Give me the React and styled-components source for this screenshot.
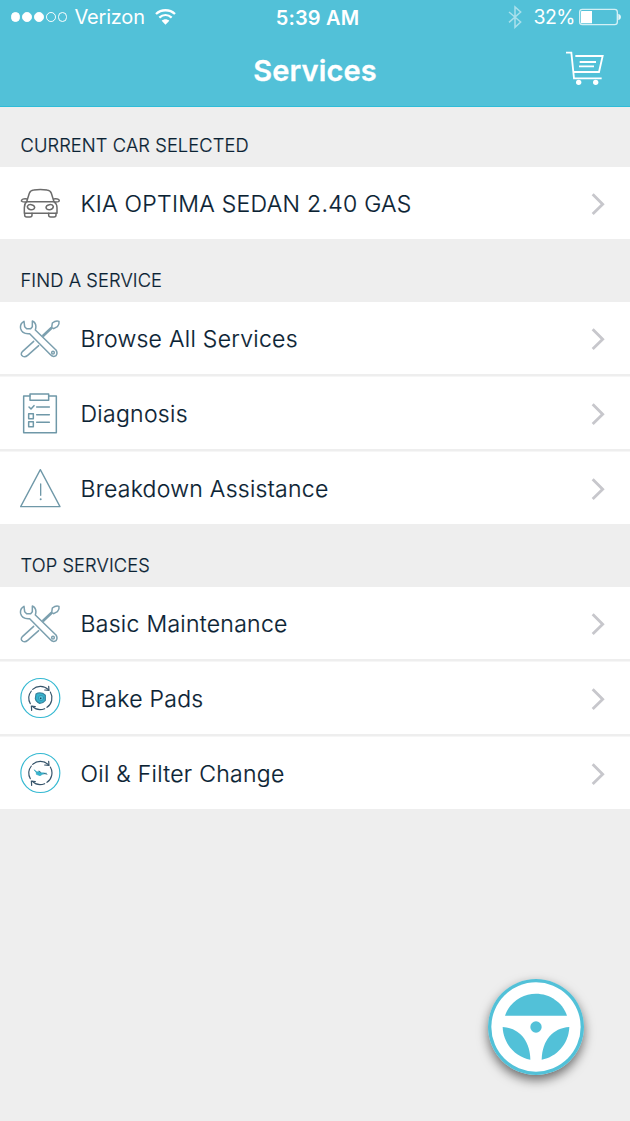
import React from "react";
import styled, { createGlobalStyle } from "styled-components";

const GlobalStyle = createGlobalStyle`
    * {
        box-sizing: border-box;
    }
    body {
        margin: 0;
        background-color: #eeeeee;
        font-family: "Inter", "Liberation Sans", sans-serif;
        color: #0a2233;
    }
`;

const Screen = styled.div`
    width: 630px;
    height: 1121px;
    background-color: #eeeeee;
    overflow: hidden;
`;

const Header = styled.header`
    height: 107px;
    background-color: #52c1d8;
    border-bottom: 1px solid #2fbcd8;
    color: white;
`;

const StatusBar = styled.div`
    display: grid;
    grid-template-columns: 1fr auto 1fr;
    align-items: center;
    height: 34px;
    padding: 0 9px 0 10px;
`;

const StatusLeft = styled.div`
    display: flex;
    align-items: center;
`;

const StatusRight = styled.div`
    display: flex;
    align-items: center;
    justify-content: flex-end;
`;

const Dots = styled.div`
    display: flex;
    gap: 2px;
    margin: 0 7px 0 0.5px;
`;

const Dot = styled.span`
    width: 9.8px;
    height: 9.8px;
    border-radius: 50%;
    border: 1px solid white;
    background-color: ${(props) => (props.$on ? "white" : "transparent")};
`;

const Carrier = styled.span`
    font-size: 20px;
    line-height: 24px;
    letter-spacing: -0.2px;
    margin-right: 10px;
`;

const Clock = styled.span`
    font-size: 20px;
    line-height: 24px;
    font-weight: 600;
    letter-spacing: 0.15px;
    margin-left: 4px;
    padding-top: 1px;
`;

const Percent = styled.span`
    font-size: 19.5px;
    line-height: 24px;
    letter-spacing: -0.5px;
    margin: 0 4px 0 11px;
`;

const NavBar = styled.div`
    display: grid;
    grid-template-columns: 1fr auto 1fr;
    align-items: center;
    height: 72px;
    padding: 0 25px;
`;

const Title = styled.h1`
    grid-column: 2;
    margin: 0;
    padding-top: 2px;
    font-size: 29px;
    line-height: 36px;
    font-weight: 600;
    letter-spacing: 0.1px;
    -webkit-text-stroke: 0.3px white;
`;

const CartButton = styled.button`
    justify-self: end;
    display: flex;
    margin-top: -3px;
    padding: 0;
    border: none;
    background: none;
    color: white;
    cursor: pointer;
`;

const SectionTitle = styled.h2`
    display: flex;
    align-items: center;
    height: ${(props) => props.$height || 63}px;
    margin: 0;
    padding: ${(props) => props.$top || 18}px 20.5px 0;
    font-size: 18.3px;
    line-height: 22px;
    font-weight: 300;
    letter-spacing: 0.1px;
    -webkit-text-stroke: 0.2px #0a2233;
`;

const List = styled.ul`
    display: flex;
    flex-direction: column;
    gap: 2px;
    margin: 0;
    padding: 0;
    list-style: none;
`;

const Row = styled.li`
    display: flex;
    align-items: center;
    box-sizing: content-box;
    height: 72px;
    padding: 0 24px 0 19px;
    background-color: white;
    cursor: pointer;

    & + & {
        border-top: 1px solid #f6f6f6;
    }
`;

const Label = styled.span`
    flex: 1;
    margin-left: 19.5px;
    padding-top: 2px;
    font-size: 23px;
    line-height: 28px;
    font-weight: 300;
    letter-spacing: 0.29px;
    -webkit-text-stroke: 0.2px #0a2233;
    white-space: nowrap;
`;

const IconSvg = styled.svg`
    flex: none;
    width: 42px;
    height: 42px;
    fill: none;
    stroke-linecap: round;
    stroke-linejoin: round;
`;

const Arrow = styled.svg`
    flex: none;
    width: 16px;
    height: 26px;
    margin-top: 2px;
    fill: none;
    stroke: #c7c7cc;
    stroke-width: 8.5;
`;

const WheelButton = styled.button`
    position: absolute;
    left: 488px;
    top: 979px;
    width: 96px;
    height: 96px;
    padding: 0;
    border: none;
    border-radius: 50%;
    background: none;
    box-shadow: 0 5px 11px rgba(0, 0, 0, 0.55);
    cursor: pointer;
`;

const WifiIcon = () => (
    <svg width="21" height="16" viewBox="464 26 63 48" fill="none" stroke="white" strokeWidth="7">
        <path d="M467 41 C483 26 508 26 524 41" />
        <path d="M477 52 C488 42 503 42 514 52" />
        <path d="M484 61 C491 55 500 55 507 61 L495.500 73 Z" fill="white" stroke="none" />
    </svg>
);

const BluetoothIcon = () => (
    <svg width="14" height="24" viewBox="56 15 42 72" fill="none" stroke="white" strokeOpacity="0.5" strokeWidth="4.500">
        <path d="M59 36 L94 66 L77 82 V21 L94 36 L59 67" />
    </svg>
);

const BatteryIcon = () => (
    <svg width="42" height="18" viewBox="267 25 126 54">
        <rect x="269" y="29" width="113" height="46" rx="8" fill="none" stroke="white" strokeOpacity="0.75" strokeWidth="4" />
        <path d="M275 34 H306 V71 H275 Q273 71 273 69 V36 Q273 34 275 34 Z" fill="white" />
        <path d="M385 42 Q393 44 393 52 Q393 60 385 62 Z" fill="white" fillOpacity="0.85" />
    </svg>
);

const CartIcon = () => (
    <svg width="40" height="37" viewBox="225 150 120 111" fill="none" stroke="white" strokeWidth="5.500">
        <path d="M228 158 H244 L252 235 H335" />
        <path d="M256 168 H338 L327 216 H251" />
        <path d="M269 186 H318 M267 199 H312" />
        <circle cx="266" cy="247" r="8" fill="white" stroke="none" />
        <circle cx="317" cy="247" r="8" fill="white" stroke="none" />
    </svg>
);

const CarIcon = () => (
    <IconSvg viewBox="57 186 126 126" stroke="#6b6b6b" strokeWidth="4.500">
        <path d="M80 245 L88 220 Q91 211 101 210 Q121 207 141 210 Q151 211 154 220 L162 245" />
        <path d="M80 245 H162 Q171 252 171 263 V280 H73 V263 Q73 251 80 245 Z" />
        <path d="M81 237 Q65 235 64 243 Q66 247 78 246 M161 237 Q177 235 178 243 Q176 247 164 246" />
        <path d="M74 280 V286 Q74 291 80 291 H90 Q96 291 96 286 V280 M146 280 V286 Q146 291 152 291 H162 Q168 291 168 286 V280" />
        <path d="M82 259 Q85 253 94 254 Q104 256 104 263 Q102 270 92 269 Q82 268 82 259 Z" />
        <path d="M160 259 Q157 253 148 254 Q138 256 138 263 Q140 270 150 269 Q160 268 160 259 Z" />
    </IconSvg>
);

const ToolsIcon = () => (
    <IconSvg viewBox="57 171 126 126" stroke="#7b9fae" strokeWidth="4.500">
        <path d="M72 184 Q59 191 62 206 Q66 223 89 221 L150 283 Q158 293 168 287 Q174 280 168 270 L106 210 Q112 190 97 183 V200 L92 206 H80 L74 200 Z" />
        <circle cx="159" cy="278" r="4" />
        <path d="M101 244 L68 274 Q59 284 69 289 Q76 292 83 286 L116 257" />
        <path d="M128 229 L155 203" strokeWidth="8" strokeLinecap="butt" />
        <path d="M155 203 L157 189 Q168 180 177 184 Q179 192 172 200 L161 206 Z" />
    </IconSvg>
);

const ClipboardIcon = () => (
    <IconSvg viewBox="57 66 126 126" stroke="#6f98a8" strokeWidth="4.500" strokeLinejoin="miter">
        <path d="M90 78 H71 V188 H169 V78 H146" />
        <path d="M90 72 H146 V91 H90 Z" />
        <path d="M87 111 L93 117 L102 107" />
        <path d="M110 111 H148 M110 134 H148 M110 157 H148" />
        <rect x="86" y="131" width="14" height="15" />
        <rect x="86" y="155" width="14" height="15" />
    </IconSvg>
);

const WarningIcon = () => (
    <IconSvg viewBox="57 291 126 126" stroke="#6f98a8" strokeWidth="4">
        <path d="M121 299 L180 410 H62 Z" />
        <path d="M122 342 V376" />
        <circle cx="122" cy="388" r="3" fill="#6f98a8" stroke="none" />
    </IconSvg>
);

// ring with two turning arrows, the part itself is drawn inside
const CycleIcon = ({ children }) => (
    <IconSvg viewBox="57 66 126 126" stroke="#36546a" strokeWidth="3.500">
        <circle cx="121" cy="129" r="58.500" stroke="#35b9d2" />
        <path d="M98 103 A34.500 34.500 0 0 1 145 104 M151 111 A34.500 34.500 0 0 1 141 157" />
        <path d="M134 161 A34.500 34.500 0 0 1 97 154 M91 146 A34.500 34.500 0 0 1 94 108" />
        <path d="M134 105 L147 106 L146 94" />
        <path d="M95 166 L94 153 L106 155" />
        {children}
    </IconSvg>
);

const BrakeIcon = () => (
    <CycleIcon>
        <path d="M108 117 Q116 112 128 115 L136 121 V136 Q130 144 119 145 Q108 141 106 131 Z" fill="#35b4cf" stroke="#36839d" />
        <circle cx="123" cy="129" r="8" fill="#52c1d8" stroke="#2f8aa6" strokeWidth="2" />
        <circle cx="122" cy="130" r="2.500" fill="#173d53" stroke="none" />
    </CycleIcon>
);

const OilIcon = () => (
    <CycleIcon>
        <path d="M103 120 L111 126 L119 124 L122 128 L140 130 L127 133 L120 137 L109 133 L109 129 Z" fill="#35b4cf" stroke="#35a4bd" strokeWidth="2" />
        <path d="M117 123 L122 127 M132 130 L141 133" strokeWidth="2" />
    </CycleIcon>
);

const WheelIcon = () => (
    <svg width="96" height="96" viewBox="54 57 288 288" fill="#52c1d8">
        <circle cx="198" cy="201" r="144" />
        <circle cx="198" cy="201" r="134" fill="white" />
        <path d="M105 167 C118 126 158 101 198 101 C238 101 278 126 291 167 Z" />
        <path d="M98 201 C100 253 137 291 181 299 C180 242 148 204 98 201 Z" />
        <path d="M298 201 C296 253 259 291 215 299 C216 242 248 204 298 201 Z" />
        <circle cx="198" cy="201" r="17" />
    </svg>
);

const findServices = [
    { name: "Browse All Services", icon: ToolsIcon },
    { name: "Diagnosis", icon: ClipboardIcon },
    { name: "Breakdown Assistance", icon: WarningIcon },
];

const topServices = [
    { name: "Basic Maintenance", icon: ToolsIcon },
    { name: "Brake Pads", icon: BrakeIcon },
    { name: "Oil & Filter Change", icon: OilIcon },
];

const ServiceRow = ({ name, icon: Icon }) => (
    <Row>
        <Icon />
        <Label>{name}</Label>
        <Arrow viewBox="60 63 48 78">
            <path d="M68 73 L98 102.500 L68 132" />
        </Arrow>
    </Row>
);

const App = () => {
    return (
        <Screen>
            <GlobalStyle />
            <Header>
                <StatusBar>
                    <StatusLeft>
                        <Dots>
                            {[1, 2, 3, 4, 5].map((n) => (
                                <Dot key={n} $on={n <= 3} />
                            ))}
                        </Dots>
                        <Carrier>Verizon</Carrier>
                        <WifiIcon />
                    </StatusLeft>
                    <Clock>5:39 AM</Clock>
                    <StatusRight>
                        <BluetoothIcon />
                        <Percent>32%</Percent>
                        <BatteryIcon />
                    </StatusRight>
                </StatusBar>
                <NavBar>
                    <Title>Services</Title>
                    <CartButton>
                        <CartIcon />
                    </CartButton>
                </NavBar>
            </Header>
            <SectionTitle $height={60} $top={15}>CURRENT CAR SELECTED</SectionTitle>
            <List>
                <ServiceRow name="KIA OPTIMA SEDAN 2.40 GAS" icon={CarIcon} />
            </List>
            <SectionTitle>FIND A SERVICE</SectionTitle>
            <List>
                {findServices.map((item) => (
                    <ServiceRow key={item.name} {...item} />
                ))}
            </List>
            <SectionTitle>TOP SERVICES</SectionTitle>
            <List>
                {topServices.map((item) => (
                    <ServiceRow key={item.name} {...item} />
                ))}
            </List>
            <WheelButton>
                <WheelIcon />
            </WheelButton>
        </Screen>
    );
};

export default App;
